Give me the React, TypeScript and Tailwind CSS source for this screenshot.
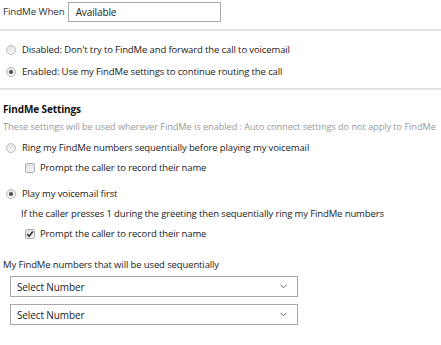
import React from "react";

const Radio = ({ checked }: { checked?: boolean }) => (
  <span className="w-[10px] h-[10px] rounded-full border border-[#bcbcbc] bg-gradient-to-b from-[#e2e2e2] to-[#f7f7f7] flex items-center justify-center shrink-0">
    {checked && <span className="w-[4px] h-[4px] rounded-full bg-[#4a4a4a]" />}
  </span>
);

const Checkbox = ({ checked }: { checked?: boolean }) => (
  <span className="w-[10px] h-[10px] rounded-[2px] border border-[#adadad] bg-gradient-to-b from-[#e0e0e0] to-[#f4f4f4] flex items-center justify-center shrink-0">
    {checked && (
      <svg width="8" height="8" viewBox="0 0 8 8">
        <path d="M1.2 4 L3.1 6.2 L6.8 1.5" fill="none" stroke="#333" strokeWidth="1.5" />
      </svg>
    )}
  </span>
);

const SelectBox = ({ className = "" }: { className?: string }) => (
  <div className={`ml-[7px] w-[288px] h-[21px] border border-[#a9a9a9] bg-white flex items-center justify-between pl-[6px] pr-[10px] text-[10px] text-[#222] ${className}`}>
    <span>Select Number</span>
    <svg width="7" height="5" viewBox="0 0 7 5">
      <path d="M0.5 0.8 L3.5 3.8 L6.5 0.8" fill="none" stroke="#666" strokeWidth="1" />
    </svg>
  </div>
);

export default function App() {
  return (
    <div
      className="w-[441px] h-[345px] bg-white text-[9.5px] tracking-[-0.12px] leading-none text-[#222] px-[3px] overflow-hidden whitespace-nowrap"
      style={{ fontFamily: '"Open Sans", "Noto Sans", sans-serif' }}
    >
      {/* FINDME WHEN */}
      <div className="flex items-center pt-[2px]">
        <span className="text-[#333] text-[9.8px]">FindMe When</span>
        <div className="ml-[3px] w-[153px] h-[20px] border border-[#aaa] flex items-center pl-[7px] text-[10px]">
          Available
        </div>
      </div>

      <div className="-mx-[3px] mt-[7px] border-t-2 border-[#e2e2e2]" />

      <div className="flex items-center gap-[6px] h-[20px] mt-[9px] pl-[3px]">
        <Radio />
        <span>Disabled: Don't try to FindMe and forward the call to voicemail</span>
      </div>
      <div className="flex items-center gap-[6px] h-[20px] mt-[2px] pl-[3px]">
        <Radio checked />
        <span>Enabled: Use my FindMe settings to continue routing the call</span>
      </div>

      <div className="-mx-[3px] mt-[6px] border-t-2 border-[#e2e2e2]" />

      {/* SETTINGS */}
      <div className="h-[18px] mt-[10px] flex items-center font-bold text-[10px] text-[#111]">FindMe Settings</div>
      <div className="h-[18px] flex items-center text-[9.2px] tracking-[-0.05px] text-[#9a9a9a]">
        These settings will be used wherever FindMe is enabled : Auto connect settings do not apply to FindMe
      </div>

      <div className="flex items-center gap-[6px] h-[20px] mt-[2px] pl-[3px]">
        <Radio />
        <span>Ring my FindMe numbers sequentially before playing my voicemail</span>
      </div>
      <div className="flex items-center gap-[5px] h-[20px] pl-[22px]">
        <Checkbox />
        <span>Prompt the caller to record their name</span>
      </div>

      <div className="flex items-center gap-[6px] h-[20px] mt-[6px] pl-[3px]">
        <Radio checked />
        <span>Play my voicemail first</span>
      </div>
      <div className="flex items-center h-[20px] pl-[18px]">
        If the caller presses 1 during the greeting then sequentially ring my FindMe numbers
      </div>
      <div className="flex items-center gap-[5px] h-[20px] pl-[22px]">
        <Checkbox checked />
        <span>Prompt the caller to record their name</span>
      </div>

      {/* NUMBERS */}
      <div className="h-[18px] mt-[12px] flex items-center">My FindMe numbers that will be used sequentially</div>
      <SelectBox className="mt-[2px]" />
      <SelectBox className="mt-[7px]" />
    </div>
  );
}
